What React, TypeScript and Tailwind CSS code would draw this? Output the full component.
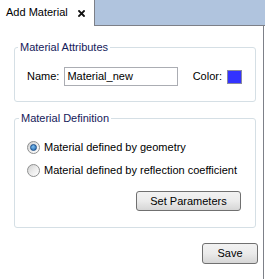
import React from 'react';

const font = { fontFamily: '"Liberation Sans", Arial, sans-serif' };

const Radio = ({ checked }: { checked: boolean }) => (
  <div className="w-[13px] h-[13px] rounded-full border border-[#8e8f8f] bg-gradient-to-br from-[#cfcfcf] via-[#ececec] to-white flex items-center justify-center shrink-0">
    {checked && (
      <div className="w-[7px] h-[7px] rounded-full bg-[radial-gradient(circle_at_40%_35%,#7fc0f0,#1b5fa8)] border border-[#1a4f8c]" />
    )}
  </div>
);

const Button = ({ label, className }: { label: string; className: string }) => (
  <button
    type="button"
    className={`border border-[#707070] rounded-[3px] bg-gradient-to-b from-[#f2f2f2] via-[#ebebeb] to-[#d6d6d6] text-[11px] text-black leading-none ${className}`}
  >
    {label}
  </button>
);

export default function App() {
  return (
    <div className="w-[265px] h-[279px] bg-white flex flex-col text-[11px] text-black" style={font}>
      <div className="flex h-[26px] shrink-0">
        <div className="w-[94px] flex items-center pl-[6px] pb-[1px]">
          <span className="leading-none">Add Material</span>
          <svg width="7" height="7" viewBox="0 0 7 7" className="ml-[10px] mt-[1px]">
            <path d="M1 1 L6 6 M6 1 L1 6" stroke="#111" strokeWidth="1.8" strokeLinecap="square" />
          </svg>
        </div>
        <div className="flex-1 bg-[#b0c4de] border-l border-b border-[#7d8088]" />
      </div>
      <div className="w-[264px] flex-1 border-r border-[#7d8088] flex flex-col pl-[14px] pr-[8px]">
        <div className="mt-[21px] w-[242px] h-[55px] border border-[#d5dfe5] rounded-[3px]">
          <div className="-mt-[8px] ml-[3px] px-[2px] w-fit bg-white leading-[14px] text-[#14205a]">
            Material Attributes
          </div>
          <div className="mt-[13px] flex items-center pl-[12px] pr-[13px]">
            <span>Name:</span>
            <div className="ml-[5px] w-[114px] h-[19px] border border-[#abadb3] flex items-center pl-[2px]">
              Material_new
            </div>
            <span className="ml-auto">Color:</span>
            <div className="ml-[5px] w-[15px] h-[14px] border border-[#8a8aa0] bg-[#3333ff]" />
          </div>
        </div>
        <div className="mt-[16px] w-[242px] h-[110px] border border-[#d5dfe5] rounded-[3px] flex flex-col">
          <div className="-mt-[8px] ml-[4px] px-[2px] w-fit bg-white leading-[14px] text-[#14205a]">
            Material Definition
          </div>
          <div className="mt-[16px] pl-[12px] flex items-center gap-[4px] h-[13px]">
            <Radio checked />
            <span>Material defined by geometry</span>
          </div>
          <div className="mt-[10px] pl-[12px] flex items-center gap-[4px] h-[13px]">
            <Radio checked={false} />
            <span>Material defined by reflection coefficient</span>
          </div>
          <div className="flex justify-end pr-[14px] mt-[14px]">
            <Button label="Set Parameters" className="w-[105px] h-[20px]" />
          </div>
        </div>
        <div className="flex justify-end mt-[15px] -mr-[3px]">
          <Button label="Save" className="w-[56px] h-[21px]" />
        </div>
      </div>
    </div>
  );
}
